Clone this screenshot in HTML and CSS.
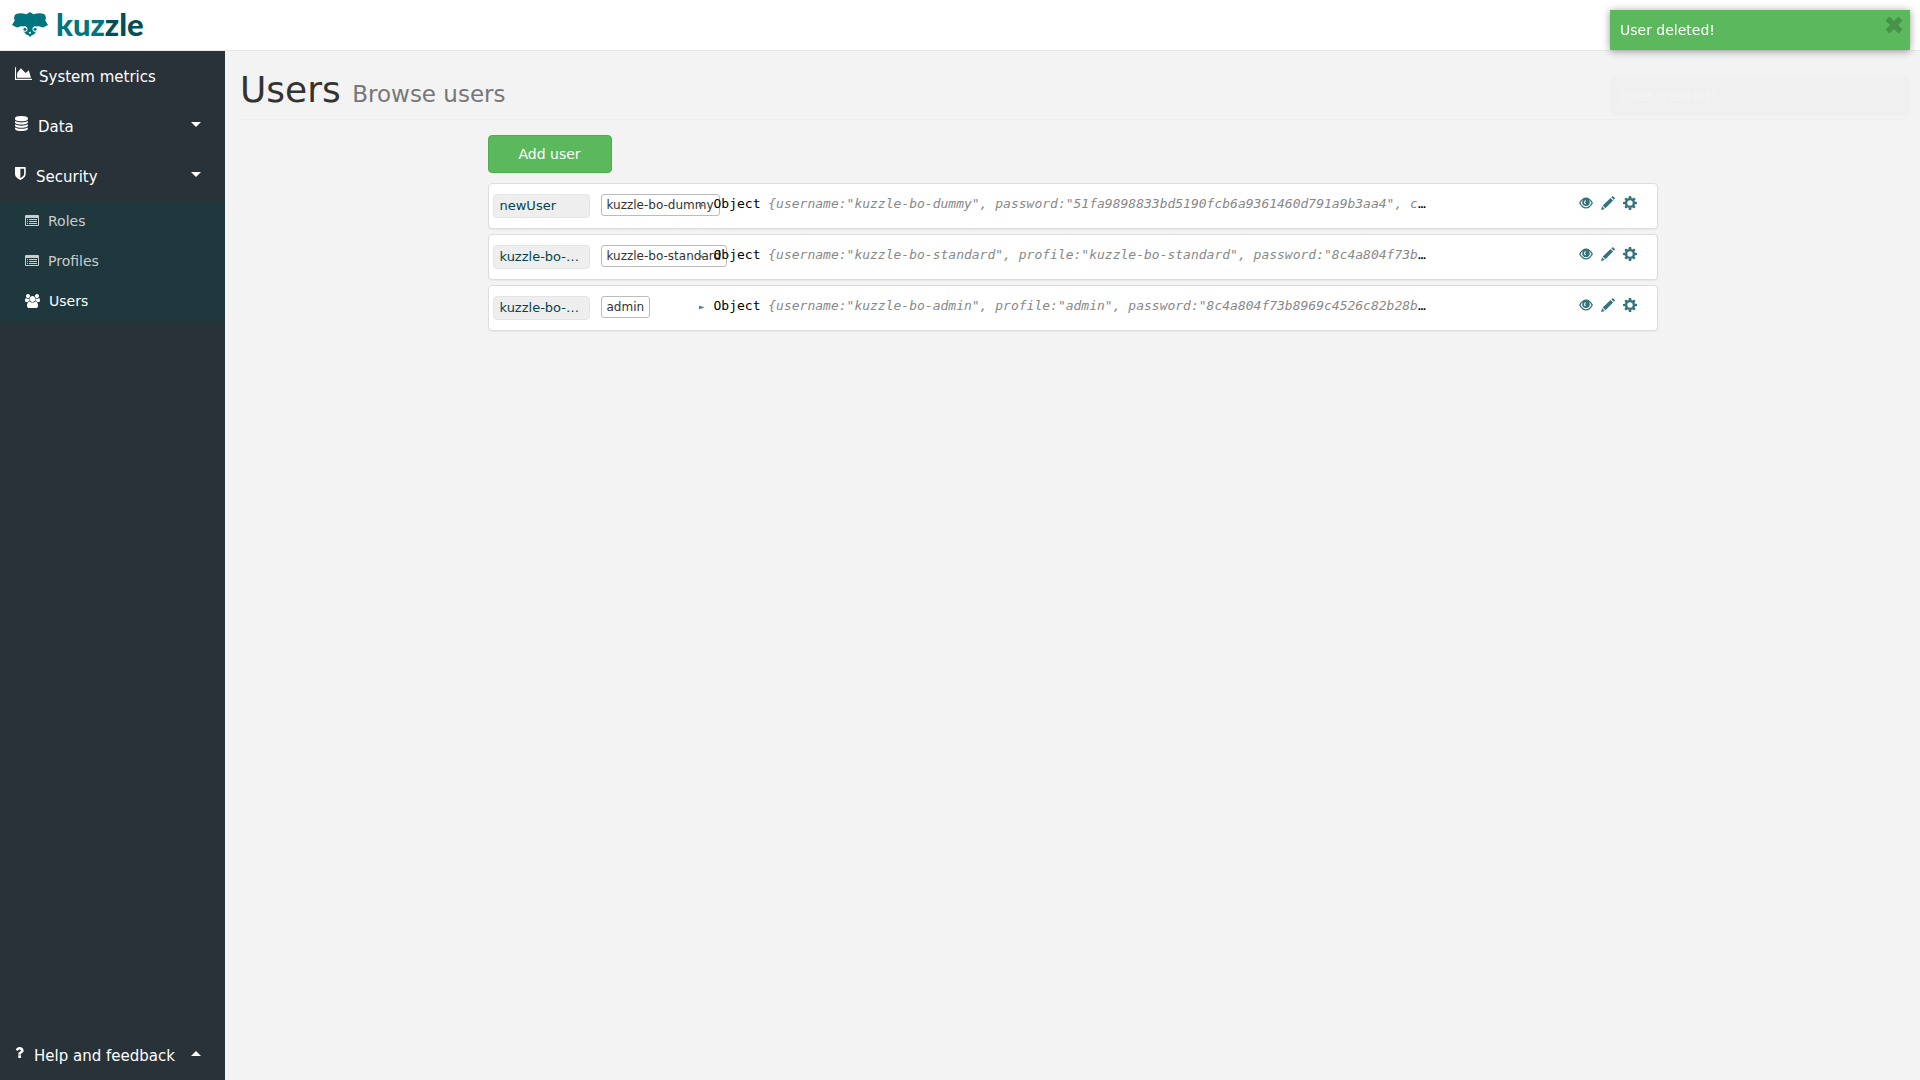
FILE: index.html
```html
<!DOCTYPE html>
<html lang="en">
<head>
<meta charset="utf-8">
<title>Kuzzle - Users</title>
<link rel="stylesheet" href="styles.css">
</head>
<body>
<svg class="sprite" aria-hidden="true">
  <symbol id="i-chart" viewBox="0 0 2048 1792"><path d="M2048 1536v128h-2048v-1536h128v1408h1920zm-384-1024l256 896h-1664v-576l448-576 576 576z"/></symbol>
  <symbol id="i-database" viewBox="128 0 1536 1792" preserveAspectRatio="xMinYMid"><path d="M896 768q237 0 443-43t325-127v170q0 69-103 128t-280 93.500-385 34.500-385-34.500-280-93.500-103-128v-170q119 84 325 127t443 43zm0 768q237 0 443-43t325-127v170q0 69-103 128t-280 93.500-385 34.500-385-34.500-280-93.500-103-128v-170q119 84 325 127t443 43zm0-384q237 0 443-43t325-127v170q0 69-103 128t-280 93.500-385 34.500-385-34.500-280-93.500-103-128v-170q119 84 325 127t443 43zm0-1152q208 0 385 34.500t280 93.500 103 128v128q0 69-103 128t-280 93.500-385 34.500-385-34.500-280-93.500-103-128v-128q0-69 103-128t280-93.500 385-34.500z"/></symbol>
  <symbol id="i-shield" viewBox="256 0 1280 1792" preserveAspectRatio="xMinYMid"><path d="M1344 960v-640h-448v1137q119-63 213-137 235-184 235-360zm192-768v768q0 86-33.500 170.500t-83 150-118 127.500-126.500 103-121 77.500-89.500 49.500-42.500 20q-12 6-26 6t-26-6q-16-7-42.500-20t-89.500-49.500-121-77.500-126.500-103-118-127.500-83-150-33.500-170.500v-768q0-26 19-45t45-19h1152q26 0 45 19t19 45z"/></symbol>
  <symbol id="i-list" viewBox="0 0 14 12"><path fill-rule="evenodd" d="M1 0h12q1 0 1 1v9q0 1-1 1H1q-1 0-1-1V1q0-1 1-1zM1 3v7h12V3zM2 4h1v1H2zM4 4h8v1H4zM2 6h1v1H2zM4 6h8v1H4zM2 8h1v1H2zM4 8h8v1H4z"/></symbol>
  <symbol id="i-users" viewBox="0 0 1920 1792"><path d="M593 896q-162 5-265 128h-134q-82 0-138-40.500t-56-118.500q0-353 124-353 6 0 43.500 21t97.500 42.500 119 21.500q67 0 133-23-5 37-5 66 0 139 81 256zm1071 637q0 120-73 189.500t-194 69.500h-874q-121 0-194-69.500t-73-189.500q0-53 3.500-103.500t14-109 26.500-108.500 43-97.500 62-81 85.500-53.500 111.500-20q10 0 43 21.500t73 48 107 48 135 21.500 135-21.500 107-48 73-48 43-21.500q61 0 111.500 20t85.500 53.500 62 81 43 97.500 26.500 108.500 14 109 3.500 103.500zm-1024-1277q0 106-75 181t-181 75-181-75-75-181 75-181 181-75 181 75 75 181zm704 384q0 159-112.500 271.500t-271.500 112.500-271.500-112.500-112.500-271.500 112.500-271.500 271.500-112.500 271.500 112.500 112.500 271.500zm576 225q0 78-56 118.500t-138 40.500h-134q-103-123-265-128 81-117 81-256 0-29-5-66 66 23 133 23 59 0 119-21.500t97.500-42.500 43.500-21q124 0 124 353zm-128-609q0 106-75 181t-181 75-181-75-75-181 75-181 181-75 181 75 75 181z"/></symbol>
  <symbol id="i-question" viewBox="384 128 1024 1536" preserveAspectRatio="xMinYMid"><path d="M1088 1256v240q0 16-12 28t-28 12h-240q-16 0-28-12t-12-28v-240q0-16 12-28t28-12h240q16 0 28 12t12 28zm316-600q0 54-15.500 101t-35 76.500-55 59.500-57.500 43.500-61 35.500q-41 23-68.500 65t-27.500 67q0 17-12 32.500t-28 15.500h-240q-15 0-25.500-18.500t-10.500-37.500v-45q0-83 65-156.500t143-108.500q59-27 84-56t25-76q0-42-46.500-74t-107.500-32q-65 0-108 29-35 25-107 115-13 16-31 16-12 0-25-8l-164-125q-13-10-15.500-25t5.500-28q160-266 464-266 80 0 161 31t146 83 106 127.500 41 158.500z"/></symbol>
  <symbol id="i-eye" viewBox="0 0 14 14"><path fill-rule="evenodd" d="M0 7Q3 1.500 7 1.500T14 7Q11 12.500 7 12.500T0 7zM1.500 7Q4 11.300 7 11.300T12.500 7Q11.600 4.800 10 3.900Q10.800 5 10.800 6.300A3.800 3.800 0 0 1 3.200 6.300Q3.200 5 4 3.900Q2.400 4.800 1.500 7zM5 6.500Q5 4.200 7 4.200V5.200Q6 5.300 6 6.500Q6 7.300 6.800 7.300V8.200Q5 8.200 5 6.500z"/></symbol>
  <symbol id="i-pencil" viewBox="0 0 14 14"><path d="M0 14L1.100 10.300L3.700 12.900zM1.800 9.600L9.500 1.900L12.100 4.500L4.400 12.200zM10.300 1.200L11.100.400Q11.600-.100 12.200.400L13.600 1.800Q14.100 2.400 13.600 2.900L12.800 3.700z"/></symbol>
  <symbol id="i-gear" viewBox="0 0 14 14"><circle cx="7" cy="7" r="3.900" fill="none" stroke="currentColor" stroke-width="2.400"/><path d="M5.900 0h2.200l.5 2.600H5.400zM5.900 14h2.200l.5-2.600H5.400zM0 5.900v2.200l2.600.5V5.400zM14 5.900v2.200l-2.600.5V5.400zM1.400 3L3 1.400l2.100 1.500-2.200 2.200zM12.600 3L11 1.400 8.900 2.900l2.200 2.200zM1.400 11L3 12.600l2.100-1.500-2.200-2.200zM12.600 11L11 12.600l-2.100-1.500 2.200-2.200z"/></symbol>
  <symbol id="i-close" viewBox="0 0 18 18"><path d="M4.500.5L9 5L13.500.5L17.500 4.500L13 9L17.500 13.500L13.500 17.500L9 13L4.500 17.500L.5 13.500L5 9L.5 4.500z"/></symbol>
</svg>

<header class="topbar">
  <a class="brand" href="#">
    <svg class="brand-mark" viewBox="0 0 36 26" aria-hidden="true">
      <path d="M18 0L21.500 2.200Q28 .3 32 2Q35 4.500 33.300 8.500L36 13L31 15.500L27 14.200L25.500 15V19.500L23.300 20.500L22 22.600L20 23L18 25L16 23L14 22.600L12.700 20.500L10.500 19.500V15L9 14.200L5 15.500L0 13L2.700 8.500Q1 4.500 4 2Q8 .3 14.500 2.200z"/>
      <g class="brand-cut"><path d="M9 14.500L13.500 14.300Q16 15.500 15.600 17.800Q15.200 19.600 13.200 19.800L9 20zM27 14.500L22.500 14.300Q20 15.500 20.400 17.800Q20.800 19.600 22.800 19.800L27 20z"/><circle cx="18" cy="20.800" r="1"/></g>
      <circle cx="12.900" cy="17.200" r="1.500"/><circle cx="23.100" cy="17.200" r="1.500"/>
    </svg>
    <span class="brand-name">kuz<span class="brand-end">zle</span></span>
  </a>
</header>

<div class="layout">
  <nav class="sidebar">
    <ul class="menu">
      <li><a class="menu-link" href="#"><svg class="icon icon-chart"><use href="#i-chart"/></svg>System metrics</a></li>
      <li><a class="menu-link" href="#"><svg class="icon icon-database"><use href="#i-database"/></svg>Data<span class="caret"></span></a></li>
      <li>
        <a class="menu-link" href="#"><svg class="icon icon-shield"><use href="#i-shield"/></svg>Security<span class="caret"></span></a>
        <ul class="submenu">
          <li><a class="sub-link" href="#"><svg class="icon icon-list"><use href="#i-list"/></svg>Roles</a></li>
          <li><a class="sub-link" href="#"><svg class="icon icon-list"><use href="#i-list"/></svg>Profiles</a></li>
          <li><a class="sub-link active" href="#"><svg class="icon icon-users"><use href="#i-users"/></svg>Users</a></li>
        </ul>
      </li>
    </ul>
    <a class="menu-link" href="#"><svg class="icon icon-question"><use href="#i-question"/></svg>Help and feedback<span class="caret up"></span></a>
  </nav>

  <main class="content">
    <h1 class="page-title">Users <small>Browse users</small></h1>
    <div class="container">
      <button class="btn-add" type="button">Add user</button>
      <ul class="users">
        <li class="user">
          <a class="user-id" href="#">newUser</a>
          <div class="profiles"><span class="profile">kuzzle-bo-dummy</span></div>
          <div class="json"><span class="arrow">►</span>Object <i>{username:"kuzzle-bo-dummy", password:"51fa9898833bd5190fcb6a9361460d791a9b3aa4", c</i>…</div>
          <div class="actions">
            <button type="button" aria-label="View"><svg><use href="#i-eye"/></svg></button>
            <button type="button" aria-label="Edit"><svg><use href="#i-pencil"/></svg></button>
            <button type="button" aria-label="Settings"><svg><use href="#i-gear"/></svg></button>
          </div>
        </li>
        <li class="user">
          <a class="user-id" href="#">kuzzle-bo-standard</a>
          <div class="profiles"><span class="profile">kuzzle-bo-standard</span></div>
          <div class="json"><span class="arrow">►</span>Object <i>{username:"kuzzle-bo-standard", profile:"kuzzle-bo-standard", password:"8c4a804f73b</i>…</div>
          <div class="actions">
            <button type="button" aria-label="View"><svg><use href="#i-eye"/></svg></button>
            <button type="button" aria-label="Edit"><svg><use href="#i-pencil"/></svg></button>
            <button type="button" aria-label="Settings"><svg><use href="#i-gear"/></svg></button>
          </div>
        </li>
        <li class="user">
          <a class="user-id" href="#">kuzzle-bo-admin</a>
          <div class="profiles"><span class="profile">admin</span></div>
          <div class="json"><span class="arrow">►</span>Object <i>{username:"kuzzle-bo-admin", profile:"admin", password:"8c4a804f73b8969c4526c82b28b</i>…</div>
          <div class="actions">
            <button type="button" aria-label="View"><svg><use href="#i-eye"/></svg></button>
            <button type="button" aria-label="Edit"><svg><use href="#i-pencil"/></svg></button>
            <button type="button" aria-label="Settings"><svg><use href="#i-gear"/></svg></button>
          </div>
        </li>
      </ul>
    </div>
  </main>
</div>

<div class="toasts" role="status">
  <div class="toast">User deleted!<button class="toast-close" type="button" aria-label="Close"><svg><use href="#i-close"/></svg></button></div>
  <div class="toast fading">User created!</div>
</div>
</body>
</html>
```
FILE: styles.css
```css
* { box-sizing: border-box; }
body {
  margin: 0;
  min-height: 100vh;
  display: flex;
  flex-direction: column;
  background: #f3f3f3;
  color: #333;
  font: 14px/20px "DejaVu Sans", sans-serif;
}
ul { list-style: none; margin: 0; padding: 0; }
a { color: inherit; text-decoration: none; }
button { font: inherit; cursor: pointer; }
svg { display: block; fill: currentColor; }
.sprite { position: absolute; width: 0; height: 0; }

.topbar {
  height: 51px;
  padding: 0 12px;
  background: #fff;
  border-bottom: 1px solid #e7e7e7;
}
.brand { display: flex; align-items: center; gap: 8px; height: 50px; color: #00757f; }
.brand-mark { width: 36px; height: 26px; }
.brand-cut { fill: #fff; }
.brand-name { font: 900 31px/48px Lato, sans-serif; height: 50px; }
.brand-end { color: #004e57; }

.layout { flex: 1; display: flex; }
.sidebar {
  width: 225px;
  flex: none;
  display: flex;
  flex-direction: column;
  justify-content: space-between;
  background: #293238;
  color: #fff;
}
.menu-link {
  display: flex;
  align-items: center;
  gap: 7px;
  height: 50px;
  padding: 1px 24px 0 15px;
  font-size: 15px;
}
.icon { flex: none; height: 15px; margin-bottom: 6px; }
.icon-chart { width: 17px; }
.icon-database { width: 16px; }
.icon-shield { width: 14px; }
.icon-question { width: 12px; height: 13px; }
.caret {
  margin: 0 0 5px auto;
  border: solid transparent;
  border-width: 5px 5px 0;
  border-top-color: #fff;
}
.caret.up { border-width: 0 5px 5px; border-bottom-color: #fff; }
.submenu { background: #1e383e; }
.sub-link {
  display: flex;
  align-items: center;
  gap: 9px;
  height: 40px;
  padding-left: 25px;
  color: #ccc;
}
.sub-link.active { color: #fff; }
.sub-link .icon { margin: 0; }
.sub-link .icon-list { width: 14px; height: 12px; }
.sub-link .icon-users { width: 15px; height: 14px; }

.content { flex: 1; min-width: 0; padding: 0 15px; }
.page-title {
  margin: 0 0 15px;
  padding: 19px 0 5px;
  border-bottom: 1px solid #eee;
  font-size: 36px;
  line-height: 40px;
  font-weight: 400;
}
.page-title small { font-size: 23px; color: #777; }
.container { max-width: 1170px; margin: 0 auto; }
.btn-add {
  display: block;
  height: 38px;
  padding: 0 30px;
  margin-bottom: 10px;
  border: 1px solid #4cae4c;
  border-radius: 4px;
  background: #5cb85c;
  color: #fff;
}
.users { display: grid; gap: 5px; }
.user {
  display: grid;
  grid-template-columns: 97px 97px minmax(0, 744px) 1fr;
  align-items: start;
  height: 46px;
  padding: 10px 20px 0 4px;
  background: #fff;
  border: 1px solid #ddd;
  border-radius: 4px;
  box-shadow: 0 1px 1px rgba(0, 0, 0, .05);
}
.user-id {
  height: 24px;
  padding: 0 6px;
  border: 1px solid #e5e5e5;
  border-radius: 4px;
  background: #eee;
  color: #00474f;
  font-size: 13px;
  line-height: 22px;
  overflow: hidden;
  text-overflow: ellipsis;
  white-space: nowrap;
}
.profiles { padding-left: 11px; white-space: nowrap; }
.profile {
  display: inline-block;
  padding: 0 5px;
  border: 1px solid #bbb;
  border-radius: 3px;
  font-size: 12px;
  line-height: 20px;
}
.json {
  margin-left: 12px;
  width: 100%;
  color: #000;
  font: 13px/20px "DejaVu Sans Mono", monospace;
  overflow: hidden;
  text-overflow: ellipsis;
  white-space: nowrap;
}
.json i { color: #888; }
.arrow { display: inline-block; width: 15px; font-size: 10px; color: #777; }
.actions { display: flex; justify-content: flex-end; gap: 8px; padding-top: 2px; }
.actions button { padding: 0; border: 0; background: none; color: #35737a; }
.actions svg { width: 14px; height: 14px; }

.toasts {
  position: fixed;
  top: 10px;
  right: 10px;
  width: 300px;
  display: grid;
  gap: 26px;
}
.toast {
  display: flex;
  justify-content: space-between;
  height: 40px;
  padding: 10px 7px 10px 10px;
  background: #5cb85c;
  color: #fff;
  box-shadow: 0 1px 8px rgba(0, 0, 0, .4);
}
.toast-close { height: 18px; margin-top: -4px; padding: 0; border: 0; background: none; color: #000; opacity: .2; }
.toast-close svg { width: 18px; height: 18px; }
.toast.fading { background: #333; opacity: .01; }
```
